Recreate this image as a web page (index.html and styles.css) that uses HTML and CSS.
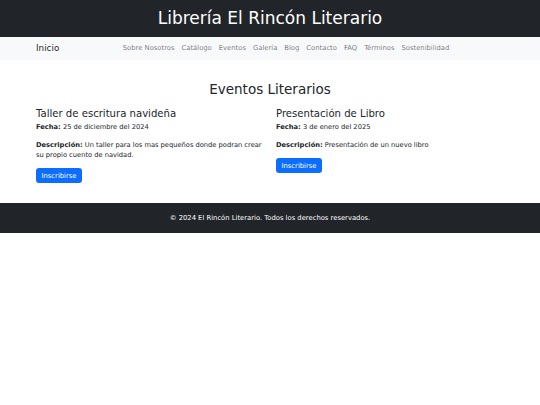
FILE: index.html
```html
<!DOCTYPE html>
<html lang="es">
<head>
<meta charset="utf-8">
<title>Librería El Rincón Literario</title>
<link rel="stylesheet" href="styles.css">
</head>
<body>
<header class="site-header">
  <h1 class="site-title">Librería El Rincón Literario</h1>
</header>
<nav class="navbar">
  <div class="container nav-inner">
    <a class="brand" href="#">Inicio</a>
    <ul class="nav-links">
      <li><a href="#">Sobre Nosotros</a></li>
      <li><a href="#">Catálogo</a></li>
      <li><a href="#">Eventos</a></li>
      <li><a href="#">Galería</a></li>
      <li><a href="#">Blog</a></li>
      <li><a href="#">Contacto</a></li>
      <li><a href="#">FAQ</a></li>
      <li><a href="#">Términos</a></li>
      <li><a href="#">Sostenibilidad</a></li>
    </ul>
  </div>
</nav>
<main class="container main">
  <h2 class="section-title">Eventos Literarios</h2>
  <div class="events">
    <div class="event">
      <h3 class="event-title">Taller de escritura navideña</h3>
      <p><strong>Fecha:</strong> 25 de diciembre del 2024</p>
      <p><strong>Descripción:</strong> Un taller para los mas pequeños donde podran crear su propio cuento de navidad.</p>
      <a class="btn" href="#">Inscribirse</a>
    </div>
    <div class="event">
      <h3 class="event-title">Presentación de Libro</h3>
      <p><strong>Fecha:</strong> 3 de enero del 2025</p>
      <p><strong>Descripción:</strong> Presentación de un nuevo libro</p>
      <a class="btn" href="#">Inscribirse</a>
    </div>
  </div>
</main>
<footer class="site-footer">
  <p>© 2024 El Rincón Literario. Todos los derechos reservados.</p>
</footer>
</body>
</html>
```

FILE: styles.css
```css
* { box-sizing: border-box; }
body {
  margin: 0;
  font-family: "DejaVu Sans", "Noto Sans", sans-serif;
  font-size: 6.8px;
  line-height: 1.5;
  color: #212529;
  background: #fff;
}
.container {
  width: 480px;
  margin: 0 auto;
  padding: 0 6px;
}
.site-header {
  background: #212529;
  color: #fff;
  height: 37px;
  display: flex;
  align-items: center;
  justify-content: center;
}
.site-title {
  margin: 0;
  font-weight: 400;
  font-size: 17px;
  line-height: 1.2;
}
.navbar {
  background: #f8f9fa;
  height: 23px;
}
.nav-inner {
  display: flex;
  align-items: center;
  height: 100%;
}
.brand {
  color: rgba(0,0,0,.9);
  text-decoration: none;
  font-size: 8.8px;
  margin-right: 60px;
}
.nav-links {
  list-style: none;
  margin: 0;
  padding: 0;
  display: flex;
}
.nav-links a {
  display: block;
  color: rgba(0,0,0,.55);
  text-decoration: none;
  font-size: 6.8px;
  padding: 0 3.5px;
}
.main {
  padding-top: 21px;
  padding-bottom: 20px;
}
.section-title {
  margin: 0 0 11px;
  text-align: center;
  font-weight: 400;
  font-size: 13.5px;
  line-height: 16px;
}
.events {
  display: grid;
  grid-template-columns: 1fr 1fr;
  column-gap: 12px;
}
.event {
  display: flex;
  flex-direction: column;
  align-items: flex-start;
}
.event-title {
  margin: 0 0 2px;
  font-weight: 400;
  font-size: 10.1px;
  line-height: 12px;
}
.event p {
  margin: 0 0 8px;
  font-size: 6.7px;
  line-height: 10px;
}
.btn {
  display: block;
  background: #0d6efd;
  color: #fff;
  text-decoration: none;
  font-size: 6.8px;
  line-height: 10px;
  padding: 2.5px 5.5px;
  border-radius: 3px;
}
.site-footer {
  background: #212529;
  color: #fff;
  height: 30px;
  display: flex;
  align-items: center;
  justify-content: center;
}
.site-footer p {
  margin: 0;
  font-size: 6.8px;
}
```
